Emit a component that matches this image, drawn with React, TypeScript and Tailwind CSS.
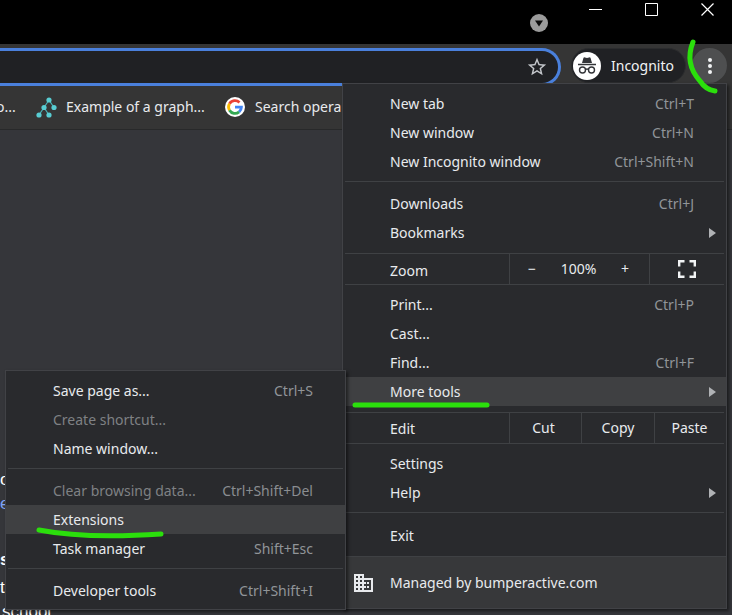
import React from "react";

type Item = {
  label: string;
  keys?: string;
  submenu?: boolean;
  active?: boolean;
  disabled?: boolean;
};

function MenuRow({ item }: { item: Item }) {
  return (
    <button
      type="button"
      role="menuitem"
      disabled={item.disabled}
      className={`flex h-[29px] w-full items-center justify-between pl-[47px] text-left ${
        item.submenu ? "pr-[10px]" : "pr-8"
      } ${item.active ? "bg-[#3f4042]" : ""} ${item.disabled ? "text-[#7f8184]" : "text-[#e8eaed]"}`}
    >
      <span>{item.label}</span>
      {item.keys && <span className={item.disabled ? "text-[#8a8d91]" : "text-[#919599]"}>{item.keys}</span>}
      {item.submenu && (
        <svg width="7" height="10" viewBox="0 0 7 10" aria-hidden="true">
          <path d="M0 0L7 5L0 10Z" fill="#b0b2b5" />
        </svg>
      )}
    </button>
  );
}

function Section({ items, className }: { items: Item[]; className: string }) {
  return (
    <div className={className}>
      {items.map((item) => (
        <MenuRow key={item.label} item={item} />
      ))}
    </div>
  );
}

function Divider() {
  return <div className="mx-[2px] h-px bg-[#3f4144]" />;
}

function MainMenu() {
  return (
    <div
      role="menu"
      className="absolute top-[83px] right-[5px] w-[385px] border border-[#414246] bg-[#292a2d] shadow-[2px_2px_3px_rgba(0,0,0,0.5)]"
    >
      <Section
        className="py-[5px]"
        items={[
          { label: "New tab", keys: "Ctrl+T" },
          { label: "New window", keys: "Ctrl+N" },
          { label: "New Incognito window", keys: "Ctrl+Shift+N" },
        ]}
      />
      <Divider />
      <Section
        className="pt-[7px] pb-[6px]"
        items={[
          { label: "Downloads", keys: "Ctrl+J" },
          { label: "Bookmarks", submenu: true },
        ]}
      />
      <div className="mx-[2px] flex h-8 border-y border-[#3f4144] text-[#e8eaed]">
        <span className="flex flex-1 items-center pt-[3px] pl-[45px]">Zoom</span>
        <div className="flex w-[140px] items-center justify-between border-l border-[#3f4144] pr-5 pl-[18px]">
          <button type="button" aria-label="Zoom out">
            −
          </button>
          <span>100%</span>
          <button type="button" aria-label="Zoom in">
            +
          </button>
        </div>
        <button
          type="button"
          aria-label="Full screen"
          className="flex w-[75px] items-center justify-center border-l border-[#3f4144]"
        >
          <svg width="18" height="18" viewBox="0 0 18 18" fill="none" stroke="#f1f3f4" strokeWidth="2.4">
            <path d="M1.2 6.500V1.200H6.500M11.500 1.200H16.800V6.500M16.800 11.500V16.800H11.500M6.500 16.800H1.200V11.500" />
          </svg>
        </button>
      </div>
      <Section
        className="pt-[5px] pb-[6px]"
        items={[
          { label: "Print...", keys: "Ctrl+P" },
          { label: "Cast..." },
          { label: "Find...", keys: "Ctrl+F" },
          { label: "More tools", submenu: true, active: true },
        ]}
      />
      <div className="mx-[2px] flex h-8 border-y border-[#3f4144] text-[#e8eaed]">
        <span className="flex flex-1 items-center pt-[2px] pl-[45px]">Edit</span>
        <button type="button" className="w-[72px] border-l border-[#3f4144] pr-[4px]">
          Cut
        </button>
        <button type="button" className="w-[73px] border-l border-[#3f4144]">
          Copy
        </button>
        <button type="button" className="w-[70px] border-l border-[#3f4144]">
          Paste
        </button>
      </div>
      <Section className="py-[5px]" items={[{ label: "Settings" }, { label: "Help", submenu: true }]} />
      <Divider />
      <Section className="pt-[8px] pb-[6px]" items={[{ label: "Exit" }]} />
      <button
        type="button"
        role="menuitem"
        className="flex h-[52px] w-full items-center gap-[17px] border-t border-[#3f4144] bg-[#37383a] pl-[11px] text-[#e8eaed]"
      >
        <svg width="19" height="18" viewBox="0 0 19 18" aria-hidden="true">
          <path
            fill="#e8eaed"
            fillRule="evenodd"
            d="M0 0H10V4H19V18H0ZM2 2V4H4V2ZM6 2V4H8V2ZM2 6V8H4V6ZM6 6V8H8V6ZM2 10V12H4V10ZM6 10V12H8V10ZM2 14V16H4V14ZM6 14V16H8V14ZM10 6V8H12V10H10V12H12V14H10V16H17V6ZM13 8H15V10H13ZM13 12H15V14H13Z"
          />
        </svg>
        <span>Managed by bumperactive.com</span>
      </button>
    </div>
  );
}

function ToolsMenu() {
  return (
    <div
      role="menu"
      className="absolute top-[370px] right-[386px] w-[341px] border border-[#414246] bg-[#292a2d] shadow-[2px_2px_3px_rgba(0,0,0,0.5)]"
    >
      <Section
        className="py-[5px]"
        items={[
          { label: "Save page as...", keys: "Ctrl+S" },
          { label: "Create shortcut...", disabled: true },
          { label: "Name window..." },
        ]}
      />
      <Divider />
      <Section
        className="pt-[7px] pb-[5px]"
        items={[
          { label: "Clear browsing data...", keys: "Ctrl+Shift+Del", disabled: true },
          { label: "Extensions", active: true },
          { label: "Task manager", keys: "Shift+Esc" },
        ]}
      />
      <Divider />
      <Section className="pt-[7px] pb-[4px]" items={[{ label: "Developer tools", keys: "Ctrl+Shift+I" }]} />
    </div>
  );
}

function TitleBar() {
  return (
    <header className="flex h-11 items-start justify-end bg-black">
      <button type="button" aria-label="Search tabs" className="mt-[14px] mr-[41px]">
        <svg width="18" height="18" viewBox="0 0 18 18">
          <circle cx="9" cy="9" r="9" fill="#9b9b9b" />
          <path d="M5 6.500H13L9 12.500Z" fill="#0a0a0a" />
        </svg>
      </button>
      <div className="flex gap-[43px] pt-[3px] pr-[18px]">
        <button type="button" aria-label="Minimize">
          <svg width="13" height="13" viewBox="0 0 13 13" stroke="#fff">
            <path d="M0 6.500H13" />
          </svg>
        </button>
        <button type="button" aria-label="Maximize">
          <svg width="13" height="13" viewBox="0 0 13 13" fill="none" stroke="#fff">
            <path d="M0.500 0.500H12.500V12.500H0.500Z" />
          </svg>
        </button>
        <button type="button" aria-label="Close">
          <svg width="13" height="13" viewBox="0 0 13 13" stroke="#fff" strokeWidth="1.200">
            <path d="M0.500 0.500L12.500 12.500M12.500 0.500L0.500 12.500" />
          </svg>
        </button>
      </div>
    </header>
  );
}

function Toolbar() {
  return (
    <div className="flex h-[42px] items-end bg-[#353535] pr-[5px]">
      <div className="flex h-[38px] flex-1 items-center rounded-r-full border-y-3 border-r-3 border-[#4a80dc] bg-[#202124] pr-[10px]">
        <input aria-label="Address" className="h-full min-w-0 flex-1 bg-transparent text-white outline-none" />
        <button type="button" aria-label="Bookmark this tab">
          <svg width="22" height="22" viewBox="0 0 24 24" fill="#c4c7cb">
            <path d="M22 9.240l-7.190-.620L12 2 9.190 8.630 2 9.240l5.460 4.730L5.820 21 12 17.270 18.180 21l-1.630-7.030L22 9.240zM12 15.400l-3.760 2.270 1-4.280-3.320-2.880 4.380-.380L12 6.100l1.710 4.040 4.380.380-3.320 2.880 1 4.280L12 15.400z" />
          </svg>
        </button>
      </div>
      <div className="mb-[3px] ml-[10px] flex h-[35px] w-[115px] items-center gap-[10px] rounded-full border border-[#2b2c2e] bg-[#202124] pl-px text-[#f1f3f4]">
        <svg width="28" height="28" viewBox="0 0 28 28" aria-hidden="true">
          <circle cx="14" cy="14" r="14" fill="#fff" />
          <path d="M9 11L10.500 5.800Q11 5 12 5.400L14 6L16 5.400Q17 5 17.500 5.800L19 11Z" fill="#333438" />
          <path d="M5 12.500H23" stroke="#333438" strokeWidth="1.500" />
          <g fill="none" stroke="#333438" strokeWidth="1.400">
            <circle cx="9.500" cy="18" r="3" />
            <circle cx="18.500" cy="18" r="3" />
            <path d="M12.500 17.500Q14 16.500 15.500 17.500" />
          </g>
        </svg>
        <span>Incognito</span>
      </div>
      <button
        type="button"
        aria-label="Chrome menu"
        className="mb-[3px] ml-[6px] flex size-[35px] items-center justify-center rounded-full bg-[#4e4f50]"
      >
        <svg width="4" height="18" viewBox="0 0 4 18" fill="#f1f3f4">
          <circle cx="2" cy="3" r="2" />
          <circle cx="2" cy="9" r="2" />
          <circle cx="2" cy="15" r="2" />
        </svg>
      </button>
    </div>
  );
}

function BookmarkBar() {
  return (
    <nav className="flex h-11 items-center border-b border-[#28292a] bg-[#353535] text-[#e8eaed]">
      <a href="#" className="-ml-1 w-10 pb-px">
        o...
      </a>
      <a href="#" className="flex w-[189px] items-center gap-[9px] pb-px">
        <svg width="21" height="21" viewBox="0 0 21 21" aria-hidden="true">
          <path d="M3 18L8 10.500L13 3L18 10.500M8 10.500L13 18" fill="none" stroke="#4bb3b8" strokeWidth="1.200" />
          <g fill="#58cdd3">
            <circle cx="13" cy="3" r="2.600" />
            <circle cx="8" cy="10.500" r="2.600" />
            <circle cx="18" cy="10.500" r="2.600" />
            <circle cx="3" cy="18" r="2.600" />
            <circle cx="13" cy="18" r="2.600" />
          </g>
        </svg>
        <span className="whitespace-nowrap">Example of a graph...</span>
      </a>
      <a href="#" className="flex items-center gap-[10px] pb-px">
        <svg width="20" height="20" viewBox="0 0 20 20" aria-hidden="true">
          <circle cx="10" cy="10" r="10" fill="#fff" />
          <g fill="none" strokeWidth="2.800">
            <path d="M4.460 6.800A6.400 6.400 0 0 1 14.500 5.500" stroke="#ea4335" />
            <path d="M4.460 13.200A6.400 6.400 0 0 1 4.460 6.800" stroke="#fbbc05" />
            <path d="M14.110 14.900A6.400 6.400 0 0 1 4.460 13.200" stroke="#34a853" />
            <path d="M10 10.200H16.400A6.400 6.400 0 0 1 14.110 14.900" stroke="#4285f4" />
          </g>
        </svg>
        <span className="whitespace-nowrap">Search opera</span>
      </a>
    </nav>
  );
}

function Marks() {
  return (
    <svg
      className="pointer-events-none absolute top-0 right-0"
      width="732"
      height="615"
      viewBox="0 0 732 615"
      fill="none"
      stroke="#2bdf0c"
      strokeWidth="5"
      strokeLinecap="round"
      aria-hidden="true"
    >
      <path d="M693 42C687 57 690 70 700 81Q706 90 715 91" />
      <path d="M355 405H487" />
      <path d="M39 530Q85 539 161 534" />
    </svg>
  );
}

export default function App() {
  return (
    <div className="relative flex h-screen flex-col overflow-hidden bg-[#35363a] font-['Noto_Sans','Open_Sans',sans-serif] text-[14px] leading-5">
      <TitleBar />
      <Toolbar />
      <BookmarkBar />
      <main className="flex-1 overflow-hidden pt-[338px] font-['Liberation_Sans',Arial,sans-serif] text-[17px] leading-6 text-white">
        <p>o</p>
        <p>
          <a href="#" className="text-[#7ea2f5]">
            e
          </a>
        </p>
        <p className="pt-8 font-bold">s</p>
        <p className="pt-[4px]">t</p>
        <p className="pl-[2px]">school</p>
      </main>
      <MainMenu />
      <ToolsMenu />
      <Marks />
    </div>
  );
}
